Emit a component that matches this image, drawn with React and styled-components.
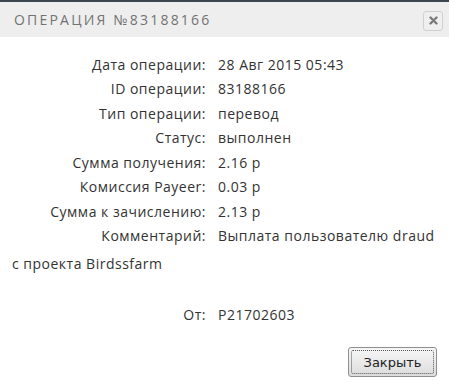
import React from "react";
import styled, { createGlobalStyle } from "styled-components";

const Global = createGlobalStyle`
  html, body { margin: 0; padding: 0; background: #fff; }
  body { font-family: "Open Sans", "Liberation Sans", sans-serif; }
`;

const Dialog = styled.div`
  width: 449px;
  height: 386px;
  box-sizing: border-box;
  border-top: 2px solid #3c4650;
  background: #fff;
  display: flex;
  flex-direction: column;
`;

const Header = styled.div`
  height: 35px;
  background: #eeeeee;
  display: flex;
  align-items: center;
  justify-content: space-between;
  padding: 0 6px 0 14px;
`;

const Title = styled.div`
  font-family: "Open Sans", "Liberation Sans", sans-serif;
  font-size: 14px;
  letter-spacing: 2.2px;
  color: #737373;
  font-weight: 400;
`;

const CloseBox = styled.div`
  width: 18px;
  height: 18px;
  border: 1px solid #d0d0d0;
  border-radius: 3px;
  background: #efefef;
  display: flex;
  align-items: center;
  justify-content: center;
  margin-top: 2px;
`;

const Body = styled.div`
  flex: 1;
  padding: 15.5px 12px 0 12px;
  font-size: 14px;
  letter-spacing: 0.5px;
  color: #333;
  line-height: 24.5px;
`;

const Row = styled.div`
  white-space: nowrap;
`;

const Label = styled.span`
  display: inline-block;
  width: 206px;
  text-align: right;
  padding-right: 12px;
  box-sizing: border-box;
`;

const Continuation = styled.div`
  margin-top: 3.5px;
`;

const Spacer = styled.div`
  height: 26.5px;
`;

const Footer = styled.div`
  display: flex;
  justify-content: flex-end;
  padding: 0 12px 9px 0;
`;

const Button = styled.button`
  width: 89px;
  height: 30px;
  border: 1px solid #8e8e8e;
  border-radius: 3px;
  background: linear-gradient(#f7f7f7, #dcdcdc);
  font-family: "DejaVu Sans", Verdana, sans-serif;
  font-size: 13px;
  color: #222;
  padding: 2px;
  cursor: pointer;
`;

const Focus = styled.span`
  display: flex;
  align-items: center;
  justify-content: center;
  height: 100%;
  border: 1px dotted #555;
  border-radius: 2px;
  box-sizing: border-box;
`;

const rows = [
  ["Дата операции:", "28 Авг 2015 05:43"],
  ["ID операции:", "83188166"],
  ["Тип операции:", "перевод"],
  ["Статус:", "выполнен"],
  ["Сумма получения:", "2.16 р"],
  ["Комиссия Payeer:", "0.03 р"],
  ["Сумма к зачислению:", "2.13 р"],
  ["Комментарий:", "Выплата пользователю draud"],
];

export default function App() {
  return (
    <>
      <Global />
      <Dialog>
        <Header>
          <Title>ОПЕРАЦИЯ №83188166</Title>
          <CloseBox>
            <svg width="9" height="9" viewBox="0 0 9 9">
              <path d="M1.5 1.5 L7.5 7.5 M7.5 1.5 L1.5 7.5" stroke="#7a7a7a" strokeWidth="2.4" strokeLinecap="round" />
            </svg>
          </CloseBox>
        </Header>
        <Body>
          {rows.map(([l, v]) => (
            <Row key={l}>
              <Label>{l}</Label>
              {v}
            </Row>
          ))}
          <Continuation>с проекта Birdssfarm</Continuation>
          <Spacer />
          <Row>
            <Label>От:</Label>
            P21702603
          </Row>
        </Body>
        <Footer>
          <Button>
            <Focus>Закрыть</Focus>
          </Button>
        </Footer>
      </Dialog>
    </>
  );
}
